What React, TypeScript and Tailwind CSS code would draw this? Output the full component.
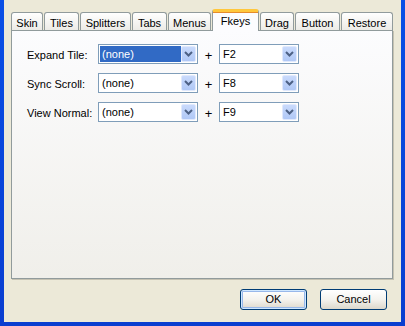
import { ReactNode } from 'react';

const TABS = [
  { label: 'Skin', w: 'w-[32px]' },
  { label: 'Tiles', w: 'w-[35px]' },
  { label: 'Splitters', w: 'w-[51px]' },
  { label: 'Tabs', w: 'w-[35px]' },
  { label: 'Menus', w: 'w-[43px]' },
  { label: 'Fkeys', w: 'w-[47px]', active: true },
  { label: 'Drag', w: 'w-[34px]' },
  { label: 'Button', w: 'w-[45px]' },
  { label: 'Restore', w: 'w-[52px]' },
];

const ROWS = [
  { label: 'Expand Tile:', mod: '(none)', key: 'F2', focused: true },
  { label: 'Sync Scroll:', mod: '(none)', key: 'F8' },
  { label: 'View Normal:', mod: '(none)', key: 'F9' },
];

function Chevron() {
  return (
    <svg width="9" height="6" viewBox="0 0 9 6">
      <path d="M1 1 L4.5 4.5 L8 1" fill="none" stroke="#4D6185" strokeWidth="2" />
    </svg>
  );
}

function Combo({ value, width, focused }: { value: string; width: string; focused?: boolean }) {
  return (
    <div className={`${width} h-[20px] border border-[#7F9DB9] bg-white flex p-[1px]`}>
      <div
        className={`flex-1 flex items-center pl-[2px] ${
          focused ? 'bg-[#316AC5] text-white' : 'text-black'
        }`}
      >
        {value}
      </div>
      <div className="w-[15px] h-full rounded-[2px] border border-[#E0E9FD] bg-gradient-to-b from-[#C9DAFC] to-[#B0C8F6] flex items-center justify-center">
        <Chevron />
      </div>
    </div>
  );
}

function XpButton({ children, isDefault }: { children: ReactNode; isDefault?: boolean }) {
  return (
    <button
      className={`w-[67px] h-[21px] rounded-[3px] border border-[#003C74] bg-gradient-to-b from-[#FFFFFF] via-[#F4F3EE] to-[#DCD8CC] text-black ${
        isDefault ? 'shadow-[inset_0_0_0_1px_#CEE7FF,inset_0_0_0_2px_#98B8EA]' : ''
      }`}
    >
      {children}
    </button>
  );
}

export default function App() {
  return (
    <div className="w-[405px] h-[326px] bg-gradient-to-b from-[#0A4FE6] to-[#0A3ED0] pl-[4px] pr-[4px] pb-[4px] font-['Liberation_Sans',Arial,sans-serif] text-[11px] text-black">
      <div className="h-full bg-[#ECE9D8] pt-[9px] pl-[7px] pr-[8px] flex flex-col">
        {/* tabs */}
        <div className="h-[21px] flex items-end gap-[1px]">
          {TABS.map(tab =>
            tab.active ? (
              <div
                key={tab.label}
                className={`${tab.w} h-[22px] -mb-[1px] relative z-10 border-x border-[#919B9C] border-t-[3px] border-t-[#FFC73C] rounded-t-[3px] bg-[#FCFCFE] flex justify-center pt-[1px] shadow-[inset_0_1px_0_#E68B2C]`}
              >
                {tab.label}
              </div>
            ) : (
              <div
                key={tab.label}
                className={`${tab.w} h-[18px] border-x border-t border-[#919B9C] rounded-t-[3px] bg-gradient-to-b from-[#FFFFFF] to-[#ECEBE6] flex justify-center pt-[2px]`}
              >
                {tab.label}
              </div>
            )
          )}
        </div>

        {/* panel */}
        <div className="h-[249px] border border-[#919B9C] shadow-[1px_1px_0_#C5C2B2] bg-gradient-to-b from-[#FCFCFE] to-[#F0EFEA] pt-[13px] pl-[15px] flex flex-col gap-[9px]">
          {ROWS.map(row => (
            <div key={row.label} className="flex items-center h-[20px]">
              <div className="w-[71px] pt-[3px]">{row.label}</div>
              <Combo value={row.mod} width="w-[100px]" focused={row.focused} />
              <div className="w-[21px] text-center pt-[3px] text-[13px]">+</div>
              <Combo value={row.key} width="w-[80px]" />
            </div>
          ))}
        </div>

        {/* buttons */}
        <div className="mt-[10px] flex justify-end gap-[13px] pr-[6px]">
          <XpButton isDefault>OK</XpButton>
          <XpButton>Cancel</XpButton>
        </div>
      </div>
    </div>
  );
}
